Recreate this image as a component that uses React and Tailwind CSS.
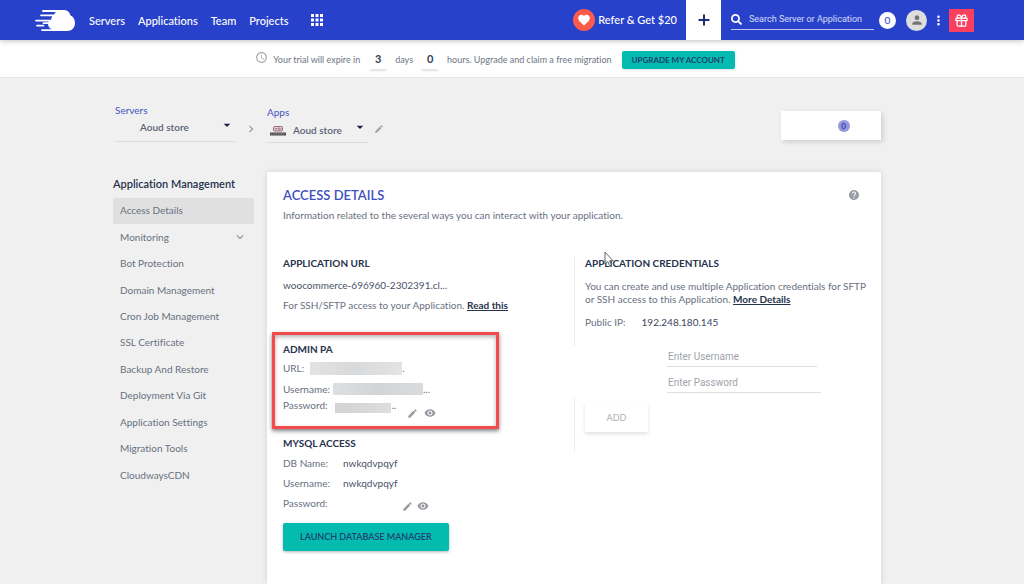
import {
  MdAccessTime,
  MdApps,
  MdArrowDropDown,
  MdChevronRight,
  MdEdit,
  MdExpandMore,
  MdFavorite,
  MdHelp,
  MdMoreVert,
  MdPerson,
  MdVisibility,
} from 'react-icons/md';
import { FaSearch } from 'react-icons/fa';
import { Gift, Plus } from 'lucide-react';

const NAV_LINKS = ['Servers', 'Applications', 'Team', 'Projects'];

const MENU = [
  { label: 'Access Details', active: true },
  { label: 'Monitoring', expandable: true },
  { label: 'Bot Protection' },
  { label: 'Domain Management' },
  { label: 'Cron Job Management' },
  { label: 'SSL Certificate' },
  { label: 'Backup And Restore' },
  { label: 'Deployment Via Git' },
  { label: 'Application Settings' },
  { label: 'Migration Tools' },
  { label: 'CloudwaysCDN' },
];

function Logo() {
  return (
    <svg viewBox="0 0 40 21" className="h-[21px] w-10" fill="white" aria-hidden="true">
      <path d="M8 0h20.500c3.800 0 6.200 2.200 6.800 5.200C38.300 6.600 40 9.300 40 13c0 4.700-3.200 8-7.600 8H7a.9.9 0 0 1 0-1.800h10c-2.400-.8-4-2.700-4-5.200 0-2.300 1.300-4 3.200-4.800.2-1.200.6-2.200 1.200-3H6a.9.9 0 0 1 0-1.800h13c.6-1 1.300-1.800 2.200-2.400H8A1 1 0 0 1 8 0Z" />
      <path d="M1 9.700h14v1.800H1a.9.9 0 0 1 0-1.800ZM2 14.700h6.500a.9.9 0 0 1 0 1.800H2a.9.9 0 0 1 0-1.800ZM8.500 12.300H14V14H8.500a.85.85 0 0 1 0-1.700Z" />
    </svg>
  );
}

function Header() {
  return (
    <header className="relative z-10 flex h-10 items-center bg-[#2741cb] pl-[35px] pr-[50px] text-white shadow-[0_1px_5px_rgba(0,0,0,0.25)]">
      <a href="#" aria-label="Home" className="mr-[14px]">
        <Logo />
      </a>
      <nav className="flex items-center gap-[13px] pt-[2px] text-[11px] font-medium">
        {NAV_LINKS.map(link => (
          <a key={link} href="#">{link}</a>
        ))}
      </nav>
      <button aria-label="All products" className="ml-5">
        <MdApps className="size-[18px]" />
      </button>
      <a href="#" className="ml-auto flex items-center gap-[3px] text-[11px] font-medium">
        <span className="flex size-[22px] items-center justify-center rounded-full bg-[#fb5b4b]">
          <MdFavorite className="size-[14px]" />
        </span>
        Refer &amp; Get $20
      </a>
      <button aria-label="Add" className="ml-[9px] flex h-10 w-[35px] items-center justify-center bg-white text-[#1f2c78]">
        <Plus className="size-4" strokeWidth={3} />
      </button>
      <label className="ml-[10px] flex h-5 w-[143px] items-center gap-[7px] border-b border-white/70">
        <FaSearch className="size-[11px] shrink-0" />
        <input
          type="text"
          aria-label="Search"
          placeholder="Search Server or Application"
          className="w-full min-w-0 bg-transparent font-[Roboto,sans-serif] text-[9px] outline-none placeholder:text-white/80"
        />
      </label>
      <span className="ml-[5px] flex size-[17px] items-center justify-center rounded-full bg-white text-[10px] text-[#2741cb]">0</span>
      <button aria-label="Account" className="ml-[10px] flex size-[21px] items-center justify-center rounded-full bg-[#dedede] text-[#757575]">
        <MdPerson className="size-[14px]" />
      </button>
      <button aria-label="More" className="ml-1">
        <MdMoreVert className="size-[15px]" />
      </button>
      <button aria-label="Rewards" className="ml-[3px] flex h-[23px] w-[25px] items-center justify-center bg-[#f9415f]">
        <Gift className="size-[15px]" strokeWidth={2} />
      </button>
    </header>
  );
}

function Counter({ value }) {
  return (
    <span className="flex h-[18px] w-[18px] items-center justify-center text-[11px] font-bold text-[#34405c] shadow-[0_3px_2px_-1px_rgba(0,0,0,0.12)]">
      {value}
    </span>
  );
}

function TrialBar() {
  return (
    <div className="flex h-[38px] items-center justify-center border-b border-[#e6e6e6] bg-white pr-[34px] pt-[2px] text-[9px] text-[#6e7484]">
      <MdAccessTime className="mb-1 mr-[5px] size-[13px] text-[#a5a5ae]" />
      <span className="mr-[9px]">Your trial will expire in</span>
      <Counter value="3" />
      <span className="mx-2">days</span>
      <Counter value="0" />
      <span className="ml-2">hours. Upgrade and claim a free migration</span>
      <button className="ml-[10px] h-[18px] rounded-xs bg-[#04bbb0] px-[10px] text-[8px] font-bold text-[#1c4270] shadow-sm">
        UPGRADE MY ACCOUNT
      </button>
    </div>
  );
}

function WooIcon() {
  return (
    <svg viewBox="0 0 16 10" className="h-[10px] w-4" aria-hidden="true">
      <rect x="3.500" y="0.500" width="9" height="4.500" rx="1" fill="#e3cdd2" stroke="#8d6470" strokeWidth="0.900" />
      <path d="M5 2l.8 1.500.8-1.500.8 1.500M8.500 2h1.300v1.500H8.500zM11 2v1.500" stroke="#8d6470" strokeWidth="0.600" fill="none" />
      <rect x="0" y="6.500" width="16" height="3" fill="#4b474c" />
      <path d="M1 8h14" stroke="#a9a6a9" strokeWidth="1" strokeDasharray="1 0.700" />
    </svg>
  );
}

function Breadcrumb() {
  return (
    <div className="flex items-start pt-[26px]">
      <div className="w-[122px] pl-[2px]">
        <div className="text-[10px] leading-3 text-[#4353c0]">Servers</div>
        <button className="flex h-[26px] w-full items-center justify-between border-b border-[#dcdcdc] pb-[2px] pl-[25px] text-[10px] font-semibold text-[#596175]">
          Aoud store
          <MdArrowDropDown className="mb-[6px] size-4 text-[#17233f]" />
        </button>
      </div>
      <MdChevronRight className="mx-[9px] mt-[18px] size-[14px] text-[#9a9a9a]" />
      <div className="w-[101px] pt-px">
        <div className="text-[10px] leading-[14px] text-[#4353c0]">Apps</div>
        <button className="flex h-6 w-full items-center border-b border-[#dcdcdc] pl-[3px] text-[10px] font-semibold text-[#596175]">
          <WooIcon />
          <span className="ml-[7px]">Aoud store</span>
          <MdArrowDropDown className="mb-2 ml-auto size-4 text-[#17233f]" />
        </button>
      </div>
      <button aria-label="Rename app" className="ml-[6px] mt-5">
        <MdEdit className="size-[10px] text-[#a3a3a3]" />
      </button>
      <div className="ml-auto mt-[7px] flex h-[29px] w-[100px] items-center justify-center bg-white pl-[25px] shadow-[2px_2px_5px_rgba(0,0,0,0.14)]">
        <span className="flex size-3 items-center justify-center rounded-full bg-[#9297de] text-[8px] font-semibold text-[#2b3a9a]">0</span>
      </div>
    </div>
  );
}

function Sidebar() {
  return (
    <aside className="w-[141px] shrink-0 pt-1">
      <h2 className="text-[11px] font-semibold leading-4 text-[#26304d]">Application Management</h2>
      <ul className="mt-[6px] flex h-[291px] flex-col text-[10px] text-[#687080]">
        {MENU.map(item => (
          <li key={item.label} className="flex flex-1">
            <a
              href="#"
              className={`flex w-full items-center justify-between rounded-xs px-[7px] pb-px ${item.active ? 'bg-[#e0e0e0]' : ''}`}
            >
              {item.label}
              {item.expandable && <MdExpandMore className="size-[14px] text-[#8a8a8a]" />}
            </a>
          </li>
        ))}
      </ul>
    </aside>
  );
}

function EditAndShow({ className }) {
  return (
    <span className={`flex items-center gap-1 text-[#96989f] ${className}`}>
      <button aria-label="Edit password"><MdEdit className="size-[11px]" /></button>
      <button aria-label="Show password"><MdVisibility className="size-3" /></button>
    </span>
  );
}

function AdminPanel() {
  return (
    <section className="-ml-[11px] mt-[17px] h-[97px] w-[227px] border-[3px] border-[#f24b4b] pl-2 pt-[5px] leading-[18px] shadow-[0_2px_4px_rgba(0,0,0,0.5),inset_0_2px_4px_rgba(0,0,0,0.3)]">
      <h3 className="font-bold text-[#27324d]">ADMIN PA</h3>
      <div className="mt-px flex items-center">
        URL:
        <span className="ml-[6px] h-[13px] w-[92px] bg-linear-to-r from-[#e3e3e4] via-[#d8d9da] to-[#e4e4e5]" />.
      </div>
      <div className="mt-[3px] flex items-center">
        Username:
        <span className="ml-[3px] h-3 w-[90px] bg-linear-to-r from-[#dedfe0] via-[#d3d4d5] to-[#dadbdc]" />...
      </div>
      <div className="-mt-[2px] flex h-[18px] items-center">
        Password:
        <span className="ml-2 mt-[6px] h-[10px] w-[56px] bg-linear-to-r from-[#d2d3d4] to-[#dcdddd]" />..
        <EditAndShow className="ml-[11px] mt-4 h-3 gap-[6px]" />
      </div>
    </section>
  );
}

function MysqlAccess() {
  return (
    <section className="mt-1 leading-5">
      <h3 className="font-bold text-[#27324d]">MYSQL ACCESS</h3>
      <dl className="grid grid-cols-[60px_1fr]">
        <dt>DB Name:</dt>
        <dd className="text-[#4a5267]">nwkqdvpqyf</dd>
        <dt>Username:</dt>
        <dd className="text-[#4a5267]">nwkqdvpqyf</dd>
        <dt>Password:</dt>
        <dd className="pl-[59px] pt-[7px]"><EditAndShow className="h-3" /></dd>
      </dl>
      <button className="mt-[10px] h-7 rounded-xs bg-[#04bbb0] px-[17px] text-[9px] font-semibold text-[#1c4270] shadow-[0_1px_3px_rgba(0,0,0,0.3)]">
        LAUNCH DATABASE MANAGER
      </button>
    </section>
  );
}

function Credentials() {
  return (
    <div className="flex-1 pt-1">
      <section className="h-[89px] border-l border-[#ececec] pl-[10px] pr-[11px]">
        <h3 className="font-bold leading-3 text-[#27324d]">APPLICATION CREDENTIALS</h3>
        <p className="mt-[11px] leading-[13px]">
          You can create and use multiple Application credentials for SFTP or SSH access to this Application.{' '}
          <a href="#" className="font-bold text-[#27324d] underline">More Details</a>
        </p>
        <p className="mt-[6px] flex gap-4 leading-5">
          Public IP: <span className="text-[#3d465e]">192.248.180.145</span>
        </p>
      </section>
      <div className="flex h-[51px] flex-col gap-[5px] pl-[93px] pr-[60px] font-[Roboto,sans-serif]">
        <input
          type="text"
          aria-label="Username"
          placeholder="Enter Username"
          className="h-[21px] w-[150px] border-b border-[#dedede] pl-px outline-none placeholder:text-[#a0a3aa]"
        />
        <input
          type="password"
          aria-label="Password"
          placeholder="Enter Password"
          className="h-[21px] w-full border-b border-[#dedede] pl-px outline-none placeholder:text-[#a0a3aa]"
        />
      </div>
      <div className="h-[55px] border-l border-[#ececec] pl-[10px] pt-[6px]">
        <button className="h-[29px] w-[63px] bg-white text-[9px] font-semibold text-[#bcbcc0] shadow-[0_2px_4px_rgba(0,0,0,0.12)]">
          ADD
        </button>
      </div>
    </div>
  );
}

function Cursor() {
  return (
    <svg viewBox="0 0 10 16" className="absolute left-[337px] top-[79px] h-4 w-[10px]" aria-hidden="true">
      <path d="M1 1v12l2.800-2.600 1.900 4.400 1.800-.8-1.900-4.200H9Z" fill="white" fillOpacity="0.800" stroke="#555" strokeWidth="0.900" />
    </svg>
  );
}

export default function App() {
  return (
    <div className="flex h-screen flex-col overflow-hidden bg-[#f0f0f0] font-[Lato,sans-serif] [font-variant-ligatures:none]">
      <Header />
      <TrialBar />
      <div className="flex flex-1 flex-col pl-[113px] pr-[143px]">
        <Breadcrumb />
        <div className="mt-[29px] flex flex-1 gap-[13px]">
          <Sidebar />
          <main className="relative flex-1 rounded-t-xs bg-white pl-4 pt-[13px] text-[10px] text-[#687080] shadow-[0_0_6px_rgba(0,0,0,0.12)]">
            <div className="flex items-center justify-between pr-[21px]">
              <h1 className="text-[13px] font-semibold leading-5 text-[#3f4fbf]">ACCESS DETAILS</h1>
              <button aria-label="Help"><MdHelp className="size-3 text-[#9a9da6]" /></button>
            </div>
            <p className="leading-5">Information related to the several ways you can interact with your application.</p>
            <div className="mt-7 flex">
              <div className="w-[291px] shrink-0">
                <section className="leading-5">
                  <h3 className="font-bold text-[#27324d]">APPLICATION URL</h3>
                  <p className="mt-[2px] text-[#4a5267]">woocommerce-696960-2302391.cl...</p>
                  <p>
                    For SSH/SFTP access to your Application.{' '}
                    <a href="#" className="font-bold text-[#27324d] underline">Read this</a>
                  </p>
                </section>
                <AdminPanel />
                <MysqlAccess />
              </div>
              <Credentials />
            </div>
            <Cursor />
          </main>
        </div>
      </div>
    </div>
  );
}
